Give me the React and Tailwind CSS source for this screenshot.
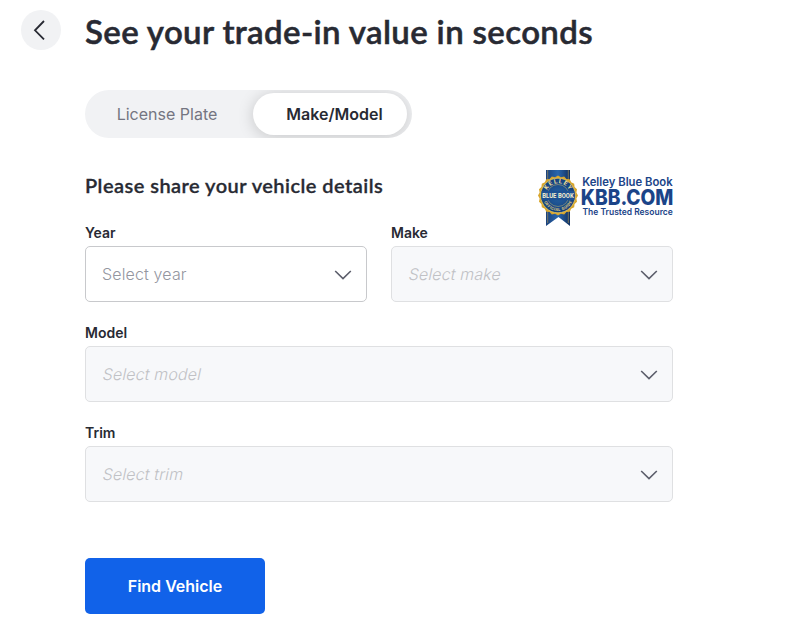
function Chevron() {
  return (
    <svg className="mt-[2px] h-[10px] w-[18px] shrink-0" viewBox="0 0 18 10" fill="none" stroke="#5c5e6b" strokeWidth="1.6">
      <path d="M1.2 1 L9 8.6 L16.8 1" />
    </svg>
  );
}

function Field({ label, placeholder, active }) {
  return (
    <div className="flex min-w-0 flex-1 flex-col">
      <label className="h-[22px] text-sm leading-[18px] font-semibold text-[#282a33]">{label}</label>
      <button
        className={
          active
            ? "flex h-14 items-center justify-between rounded-[5px] border border-[#c8c9cc] bg-white pr-[14px] pl-4 text-base font-light tracking-[0.14px] text-[#94969f]"
            : "flex h-14 items-center justify-between rounded-[5px] border border-[#dfe0e2] bg-[#f7f8fa] pr-[14px] pl-[17px] text-base font-light tracking-[0.14px] text-[#c0c1c5]"
        }
      >
        <span className={active ? "" : "-skew-x-12"}>{placeholder}</span>
        <Chevron />
      </button>
    </div>
  );
}

function KbbLogo() {
  const teeth = Array.from({ length: 40 }, (_, i) => {
    const r = i % 2 ? 18.6 : 20;
    const a = (i * Math.PI) / 20;
    return `${20 + r * Math.cos(a)},${25.5 + r * Math.sin(a)}`;
  }).join(" ");
  return (
    <svg className="-mr-px h-[58px] w-[136px] overflow-visible" viewBox="0 0 136 58">
      <defs>
        <linearGradient id="ribbon">
          <stop offset="0" stopColor="#1b427c" />
          <stop offset=".5" stopColor="#2866ad" />
          <stop offset="1" stopColor="#12305f" />
        </linearGradient>
        <radialGradient id="seal">
          <stop offset="0" stopColor="#2864a5" />
          <stop offset="1" stopColor="#123f7b" />
        </radialGradient>
        <path id="upper" d="M7.7 25.5 A12.3 12.3 0 0 1 32.3 25.5" />
        <path id="lower" d="M4.6 25.5 A15.4 15.4 0 0 0 35.4 25.5" />
      </defs>
      <path d="M8 0H32V56L20.5 47L8 56Z" fill="url(#ribbon)" />
      <path d="M9.7 0V53M30.3 0V53" stroke="#b29b55" strokeWidth=".6" />
      <polygon points={teeth} fill="#d8a62d" />
      <circle cx="20" cy="25.5" r="17.3" fill="url(#seal)" stroke="#eed36b" strokeWidth=".7" />
      <circle cx="20" cy="25.5" r="11" fill="none" stroke="#c9b66b" strokeWidth=".5" />
      <rect x="3.6" y="20.8" width="32.8" height="9.4" fill="#1d5193" />
      <text className="font-['Roboto',sans-serif] text-[7px] font-bold" x="4.3" y="28" fill="#f3edcf" textLength="31.4" lengthAdjust="spacingAndGlyphs">BLUE BOOK</text>
      <text className="font-['Roboto',sans-serif] text-[6.2px] font-bold" fill="#f0df9a">
        <textPath href="#upper" startOffset="50%" textAnchor="middle" textLength="27">KELLEY</textPath>
      </text>
      <text className="font-['Roboto',sans-serif] text-[4px] font-bold" fill="#e5cf7d">
        <textPath href="#lower" startOffset="50%" textAnchor="middle" textLength="35">OFFICIAL GUIDE</textPath>
      </text>
      <g fill="#1b4488">
        <text className="font-['Inter',sans-serif] text-[11.4px] font-semibold" x="44.2" y="16.2" textLength="90.5" lengthAdjust="spacingAndGlyphs">Kelley Blue Book</text>
        <text className="font-['Inter',sans-serif] text-[21.3px] font-extrabold" x="42.8" y="35.2" textLength="92.6" lengthAdjust="spacingAndGlyphs">KBB.COM</text>
        <text className="font-['Inter',sans-serif] text-[9px] font-semibold" x="44.5" y="45.3" textLength="90.3" lengthAdjust="spacingAndGlyphs">The Trusted Resource</text>
      </g>
    </svg>
  );
}

export default function App() {
  return (
    <main className="flex h-[630px] w-[792px] items-start overflow-hidden bg-white pl-[21px] font-['Inter',sans-serif] text-[#282a33]">
      <button aria-label="Back" className="mt-[10px] flex size-10 shrink-0 items-center justify-center rounded-full bg-[#f1f2f4]">
        <svg className="mr-1 h-5 w-3" viewBox="0 0 12 20" fill="none" stroke="#282a33" strokeWidth="1.8">
          <path d="M11 1 L2 10.3 L11 19.4" />
        </svg>
      </button>
      <div className="ml-6 flex w-[588px] flex-col">
        <h1 className="mt-[11px] h-10 font-['Lato',sans-serif] text-[33px] leading-10 font-semibold tracking-[0.36px] whitespace-nowrap [-webkit-text-stroke:0.5px_#282a33]">
          See your trade-in value in seconds
        </h1>
        <div className="mt-[39px] flex h-12 w-[327px] items-center overflow-hidden rounded-full bg-[#f1f2f4] pr-[5px]">
          <button className="h-full w-[168px] pr-1 text-base font-normal text-[#747581]">License Plate</button>
          <button className="h-[42px] w-[154px] rounded-full bg-white pl-[9px] text-base font-semibold shadow-[0_2px_16px_rgba(0,0,0,0.18)]">
            Make/Model
          </button>
        </div>
        <div className="mt-8 flex h-[54px] items-start justify-between">
          <h2 className="font-['Lato',sans-serif] text-xl leading-[30px] font-semibold tracking-[0.46px] whitespace-nowrap [-webkit-text-stroke:0.3px_#282a33]">
            Please share your vehicle details
          </h2>
          <KbbLogo />
        </div>
        <div className="flex gap-6">
          <Field label="Year" placeholder="Select year" active />
          <Field label="Make" placeholder="Select make" />
        </div>
        <div className="mt-[22px] flex">
          <Field label="Model" placeholder="Select model" />
        </div>
        <div className="mt-[22px] flex">
          <Field label="Trim" placeholder="Select trim" />
        </div>
        <button className="mt-14 h-14 w-[180px] rounded-[5px] bg-[#1162e9] text-base font-semibold text-white">
          Find Vehicle
        </button>
      </div>
    </main>
  );
}
